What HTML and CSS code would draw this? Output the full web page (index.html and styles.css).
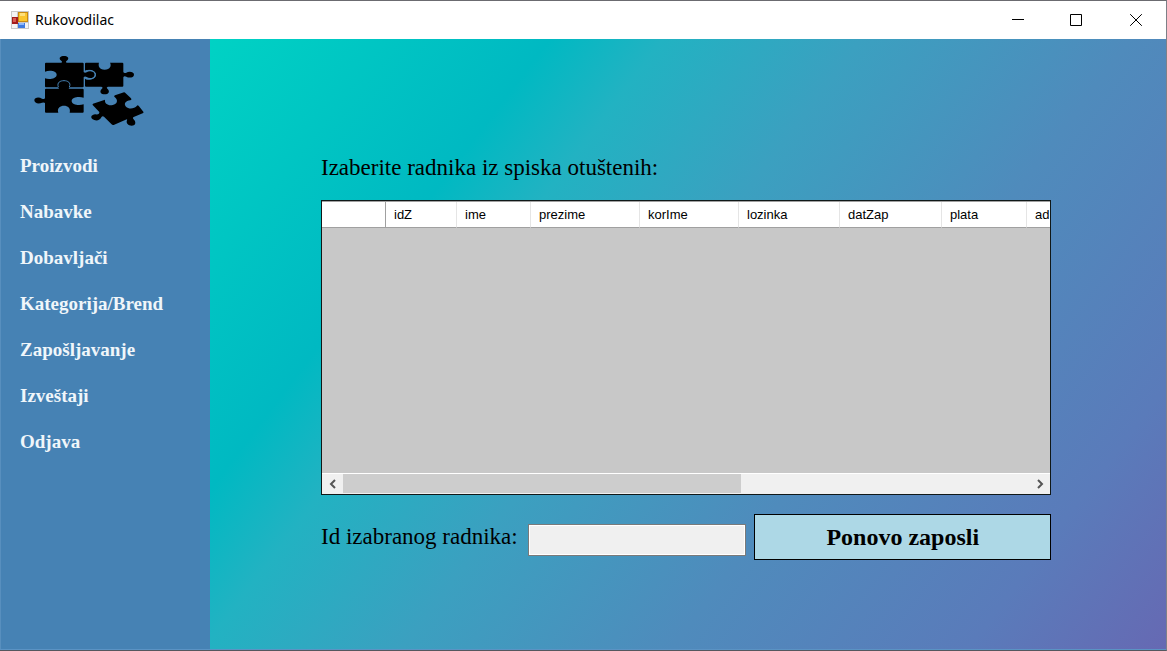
FILE: index.html
```html
<!DOCTYPE html>
<html lang="sr-Latn">
<head>
<meta charset="utf-8">
<title>Rukovodilac</title>
<link rel="stylesheet" href="styles.css">
</head>
<body>
<div class="window">
  <header class="titlebar">
    <svg class="app-icon" viewBox="0 0 18 18" aria-hidden="true">
      <rect width="18" height="18" fill="#c9c9c9"/>
      <path d="M1 1h5v5H1zM1 13h5v4H1zM14 12h3v5h-3z" fill="#f4f4f4"/>
      <rect x="7" y="1" width="10" height="10" fill="#c98a10"/>
      <rect x="8" y="2" width="8" height="8" fill="#fbc52c"/>
      <rect x="9" y="2" width="5" height="3" fill="#ffe07a"/>
      <rect x="1" y="6" width="6" height="7" fill="#a31c1c"/>
      <rect x="2" y="7" width="3" height="4" fill="#d85a50"/>
      <rect x="7" y="12" width="7" height="5" fill="#3f7be0"/>
      <rect x="8" y="12" width="5" height="2" fill="#8fb8f8"/>
    </svg>
    <h1 class="title">Rukovodilac</h1>
    <div class="controls">
      <button class="control" type="button" aria-label="Minimize"><svg viewBox="0 0 12 12"><path d="M0 5.5h12"/></svg></button>
      <button class="control" type="button" aria-label="Maximize"><svg viewBox="0 0 12 12"><path d="M.5.5h11v11H.5z"/></svg></button>
      <button class="control" type="button" aria-label="Close"><svg viewBox="0 0 12 12"><path d="M.2.2l11.6 11.6M11.8.2L.2 11.8"/></svg></button>
    </div>
  </header>
  <div class="body">
    <aside class="sidebar">
      <svg class="logo" viewBox="0 0 375 240" aria-hidden="true">
        <path d="M63 38H109Q114 36 107 31C100 23 107 18 117 18S134 23 127 31Q120 36 125 38H173Q176 38 176 41V66Q179 70 185 67C193 61 209 64 209 74S193 87 185 81Q179 78 176 82V109Q176 112 173 112H63Q60 112 60 109V85C73 89 95 86 95 74S73 59 60 65V41Q60 38 63 38Z"/>
        <path d="M183 38H222C219 46 222 59 239 59S260 46 255 38H292Q295 38 295 41V66Q297 71 304 68C312 63 327 65 327 74S312 85 304 80Q297 77 295 82V107Q295 110 292 110H249Q242 112 248 117C256 126 250 133 239 133S222 126 230 117Q236 112 229 110H183Q180 110 180 107V86C193 92 213 87 213 74S193 57 180 62V41Q180 38 183 38Z"/>
        <path d="M63 116H102C93 102 104 94 117 94S141 102 131 116H173Q176 116 176 119V143C161 138 140 142 140 153S161 168 176 163V185Q176 188 173 188H134C138 174 128 167 117 167S95 174 100 188H63Q60 188 60 185V160Q59 156 51 158C41 163 28 160 28 151S42 140 51 146Q59 149 60 144V119Q60 116 63 116Z"/>
        <path class="seam" d="M100 111C95 97 106 92 117 92S139 98 133 111M181 63C197 58 211 63 211 74S196 90 181 86"/>
        <path d="M204 161L240 149C238 160 249 168 263 165S281 150 268 140Q266 138 270 136L297 127Q300 127 302 130L318 145Q322 149 316 151C302 152 295 162 303 170S328 177 336 167Q338 164 342 169L355 185Q357 188 353 190L326 201Q321 204 327 209C335 218 330 227 320 227S302 220 306 211Q308 205 302 209L266 225Q262 226 259 222L237 200Q232 197 229 202C226 212 211 214 203 208S199 194 211 193Q224 195 223 186L203 165Q202 162 204 161Z"/>
      </svg>
      <nav class="menu" aria-label="Meni">
        <a href="#proizvodi">Proizvodi</a>
        <a href="#nabavke">Nabavke</a>
        <a href="#dobavljaci">Dobavljači</a>
        <a href="#kategorija">Kategorija/Brend</a>
        <a href="#zaposljavanje">Zapošljavanje</a>
        <a href="#izvestaji">Izveštaji</a>
        <a href="#odjava">Odjava</a>
      </nav>
    </aside>
    <main class="content">
      <h2 class="caption" id="caption">Izaberite radnika iz spiska otuštenih:</h2>
      <div class="grid">
        <div class="grid-view">
          <table class="workers" aria-labelledby="caption">
            <colgroup>
              <col class="c-head"><col class="c-id"><col class="c-ime"><col class="c-prezime"><col class="c-korime"><col class="c-lozinka"><col class="c-datzap"><col class="c-plata"><col class="c-ad">
            </colgroup>
            <thead>
              <tr><td></td><th scope="col">idZ</th><th scope="col">ime</th><th scope="col">prezime</th><th scope="col">korIme</th><th scope="col">lozinka</th><th scope="col">datZap</th><th scope="col">plata</th><th scope="col">ad</th></tr>
            </thead>
          </table>
        </div>
        <div class="scrollbar">
          <button class="arrow" type="button" aria-label="Levo"><svg viewBox="0 0 8 10"><path d="M6 1L2 5l4 4"/></svg></button>
          <div class="track"><div class="thumb"></div></div>
          <button class="arrow" type="button" aria-label="Desno"><svg viewBox="0 0 8 10"><path d="M2 1l4 4-4 4"/></svg></button>
        </div>
      </div>
      <form class="rehire">
        <label for="worker-id">Id izabranog radnika:</label>
        <input class="worker-id" id="worker-id" type="text" readonly>
        <button class="submit" type="button">Ponovo zaposli</button>
      </form>
    </main>
  </div>
</div>
</body>
</html>
```
FILE: styles.css
```css
* {
  box-sizing: border-box;
}

body {
  margin: 0;
  font-family: "Liberation Serif", "Times New Roman", serif;
  color: #000;
}

button {
  font: inherit;
  padding: 0;
  border: 0;
}

.window {
  display: flex;
  flex-direction: column;
  min-height: 100vh;
  overflow: hidden;
  border-top: 1px solid #6b6b70;
  border-right: 1px solid #7d8087;
  border-bottom: 1px solid #55575e;
}

.titlebar {
  display: flex;
  align-items: center;
  height: 38px;
  padding-left: 11px;
  background: #fff;
}

.app-icon {
  width: 18px;
  height: 18px;
}

.title {
  margin: 0 auto 0 6px;
  font: 400 14px/20px "Noto Sans", "Open Sans", sans-serif;
}

.controls {
  display: flex;
  align-self: stretch;
}

.control {
  display: grid;
  place-items: center;
  width: 58px;
  background: none;
}

.control:last-child {
  width: 61px;
}

.control svg {
  width: 12px;
  height: 12px;
  fill: none;
  stroke: #000;
}

.body {
  display: flex;
  flex: 1;
  border-bottom: 1px solid #5b93c4;
}

.sidebar {
  flex: 0 0 210px;
  background: #4682b4;
  border-left: 1px solid #588fbe;
}

.logo {
  display: block;
  width: 125px;
  height: 80px;
  margin: 11px 0 0 24px;
}

.seam {
  fill: none;
  stroke: #4682b4;
  stroke-width: 3;
}

.menu {
  display: grid;
  row-gap: 22px;
  padding: 24px 19px;
}

.menu a {
  font-size: 19px;
  font-weight: 700;
  line-height: 24px;
  color: #f0f6fa;
  text-decoration: none;
}

.content {
  flex: 1;
  min-width: 0;
  padding: 114px 115px 0 111px;
  background: linear-gradient(127deg, #00d2c4 0%, #00b9c2 24%, #22b2c2 32%, #3ba0c0 46%, #4f8bbc 65%, #5a7bba 86%, #6669b3 100%);
}

.caption {
  margin: 0;
  font-size: 23px;
  font-weight: 400;
  line-height: 30px;
}

.grid {
  margin-top: 17px;
  border: 1px solid #101818;
  background: #c8c8c8;
}

.grid-view {
  height: 272px;
  overflow: hidden;
}

.workers {
  width: 100%;
  table-layout: fixed;
  border-collapse: separate;
  border-spacing: 0;
  background: #fff;
  border-top: 1px solid #a0a0a0;
}

.workers th,
.workers td {
  height: 26px;
  padding: 0 0 0 8px;
  border-right: 1px solid #e5e5e5;
  border-bottom: 1px solid #a0a0a0;
  font: 400 13px/24px "Liberation Sans", Arial, sans-serif;
  text-align: left;
}

.workers td {
  border-right-color: #a0a0a0;
}

.workers th:last-child {
  border-right: 0;
}

.c-head { width: 64px; }
.c-id { width: 71px; }
.c-ime { width: 74px; }
.c-prezime { width: 109px; }
.c-korime { width: 99px; }
.c-lozinka { width: 101px; }
.c-datzap { width: 102px; }
.c-plata { width: 85px; }

.scrollbar {
  display: flex;
  height: 21px;
  background: #f0f0f0;
  border-top: 1px solid #fff;
}

.arrow {
  display: grid;
  place-items: center;
  width: 21px;
  background: #f0f0f0;
}

.arrow svg {
  width: 8px;
  height: 10px;
  fill: none;
  stroke: #555;
  stroke-width: 2;
}

.track {
  flex: 1;
}

.thumb {
  width: 58%;
  height: 19px;
  background: #cdcdcd;
}

.rehire {
  display: grid;
  grid-template-columns: 199px 14fr 19fr;
  column-gap: 8px;
  align-items: center;
  margin-top: 19px;
  font-size: 23px;
}

.rehire label {
  white-space: nowrap;
}

.worker-id {
  width: 100%;
  height: 32px;
  margin-top: 6px;
  padding: 0 4px;
  border: 1px solid #7a7a7a;
  background: #f0f0f0;
  box-shadow: inset 0 0 0 1px #fff;
  font: inherit;
}

.submit {
  height: 46px;
  border: 1px solid #000;
  background: #add8e6;
  font-size: 24px;
  font-weight: 700;
}
```
